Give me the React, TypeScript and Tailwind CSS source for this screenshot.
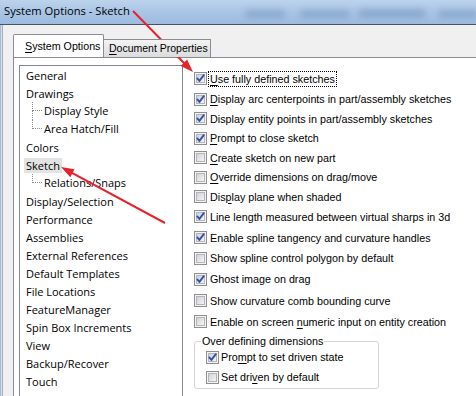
import React from "react";

const UI = { fontFamily: '"Liberation Sans", Arial, sans-serif' };
const SEG = { fontFamily: '"Open Sans", "Noto Sans", sans-serif' };

function Box({ checked }: { checked: boolean }) {
  return (
    <svg width="13" height="13" viewBox="0 0 13 13" className="shrink-0">
      <defs>
        <linearGradient id="cbg" x1="0" y1="0" x2="1" y2="1">
          <stop offset="0" stopColor="#cdd0d6" />
          <stop offset="1" stopColor="#f7f7f7" />
        </linearGradient>
      </defs>
      <rect x="0.5" y="0.5" width="12" height="12" fill="#f4f4f4" stroke="#8f8f8f" />
      <rect x="2.5" y="2.5" width="8" height="8" fill="url(#cbg)" stroke="#b3b5b9" />
      {checked && (
        <path d="M3.3 6.4 L5.4 8.9 L9.8 3.2" fill="none" stroke="#3552a6" strokeWidth="1.9" strokeLinecap="round" strokeLinejoin="round" />
      )}
    </svg>
  );
}

function Label({ pre, u, post }: { pre: string; u?: string; post?: string }) {
  return (
    <>
      {pre}
      {u ? <span className="underline underline-offset-[2px]">{u}</span> : null}
      {post}
    </>
  );
}

type Row = { h: string; c: boolean; pre: string; u?: string; post?: string; focus?: boolean };

const rows: Row[] = [
  { h: "h-[21px]", c: true, pre: "", u: "U", post: "se fully defined sketches", focus: true },
  { h: "h-[20px]", c: true, pre: "", u: "D", post: "isplay arc centerpoints in part/assembly sketches" },
  { h: "h-[19px]", c: true, pre: "Display entity points in part/assembly sketches" },
  { h: "h-[20px]", c: true, pre: "", u: "P", post: "rompt to close sketch" },
  { h: "h-[19px]", c: false, pre: "", u: "C", post: "reate sketch on new part" },
  { h: "h-[20px]", c: false, pre: "", u: "O", post: "verride dimensions on drag/move" },
  { h: "h-[19px]", c: false, pre: "Dis", u: "p", post: "lay plane when shaded" },
  { h: "h-[21px]", c: true, pre: "Line length measured between virtual sharps in 3d" },
  { h: "h-[21px]", c: true, pre: "Enable spline tangency and curvature handles" },
  { h: "h-[20px]", c: false, pre: "Show spline control polygon by default" },
  { h: "h-[22px]", c: true, pre: "Ghost image on drag" },
  { h: "h-[21px]", c: false, pre: "Show curvature comb bounding curve" },
  { h: "h-[21px]", c: false, pre: "Enable on screen ", u: "n", post: "umeric input on entity creation" },
];

type TreeItem = { t: string; child?: boolean; last?: boolean; sel?: boolean };
const tree: TreeItem[] = [
  { t: "General" },
  { t: "Drawings" },
  { t: "Display Style", child: true },
  { t: "Area Hatch/Fill", child: true, last: true },
  { t: "Colors" },
  { t: "Sketch", sel: true },
  { t: "Relations/Snaps", child: true, last: true },
  { t: "Display/Selection" },
  { t: "Performance" },
  { t: "Assemblies" },
  { t: "External References" },
  { t: "Default Templates" },
  { t: "File Locations" },
  { t: "FeatureManager" },
  { t: "Spin Box Increments" },
  { t: "View" },
  { t: "Backup/Recover" },
  { t: "Touch" },
  { t: "Hole Wizard/Toolbox" },
];

export default function App() {
  return (
    <div className="relative w-[476px] h-[396px] overflow-hidden flex flex-col bg-[#f0f0f0] text-black" style={UI}>
      {/* title bar */}
      <div className="relative h-[24px] shrink-0 overflow-hidden bg-gradient-to-b from-[#bcd3ec] via-[#a9c5e6] to-[#9dbbe0]">
        <div className="absolute left-[245px] top-[10px] w-[40px] h-[8px] rounded-full bg-[#6f8fb8] opacity-50 blur-[3px]" />
        <div className="absolute left-[300px] top-[10px] w-[50px] h-[8px] rounded-full bg-[#6f8fb8] opacity-50 blur-[3px]" />
        <div className="absolute left-[358px] top-[9px] w-[68px] h-[9px] rounded-full bg-[#6f8fb8] opacity-50 blur-[3px]" />
        <div className="absolute left-[438px] top-[10px] w-[40px] h-[8px] rounded-full bg-[#6f8fb8] opacity-50 blur-[3px]" />
        <div className="relative pl-[4px] pt-[3px] text-[11.2px] leading-[16px] text-black" style={SEG}>
          System Options - Sketch
        </div>
      </div>
      <div className="flex-1 flex border-t border-[#48535f] min-h-0">
        <div className="w-[3px] shrink-0 bg-gradient-to-r from-[#7f9bbf] via-[#cbdaec] to-[#dbe5f0] border-r border-[#a4afbb]" />
        <div className="flex-1 flex flex-col pl-[10px] pt-[10px] min-h-0">
          {/* tabs */}
          <div className="flex items-end h-[22px] shrink-0 relative z-10">
            <div className="h-[23px] w-[91px] bg-white border border-b-0 border-[#898c95] rounded-t-[2px] pl-[11px] pt-[4px] text-[10.7px] leading-[14px] whitespace-nowrap">
              <span className="underline underline-offset-[2px]">S</span>ystem Options
            </div>
            <div className="h-[18px] w-[108px] -ml-[1px] bg-gradient-to-b from-[#f3f3f3] to-[#dcdcdc] border border-b-0 border-[#898c95] pl-[5px] pt-[1px] text-[10.5px] leading-[14px] whitespace-nowrap">
              <span className="underline underline-offset-[2px]">D</span>ocument Properties
            </div>
          </div>
          {/* page */}
          <div className="flex-1 flex bg-white border-l border-t border-[#898c95] pt-[7px] pl-[5px] min-h-0">
            {/* tree */}
            <div className="w-[164px] shrink-0 border border-b-0 border-[#828790] bg-white pl-[4px] text-[11px]" style={SEG}>
              {tree.map((it, i) =>
                it.child ? (
                  <div key={i} className="h-[18px] flex items-stretch pl-[8px] leading-[18px]">
                    <div className="w-[10px] flex flex-col shrink-0">
                      <div className="h-[9px] border-l border-b border-dotted border-[#8a8a8a]" />
                      {!it.last && <div className="flex-1 border-l border-dotted border-[#8a8a8a]" />}
                    </div>
                    <span className="px-[2px] whitespace-nowrap">{it.t}</span>
                  </div>
                ) : (
                  <div key={i} className="h-[18px] flex items-center">
                    <span className={"px-[2px] leading-[15px] whitespace-nowrap " + (it.sel ? "bg-[#e3e3e3]" : "")}>{it.t}</span>
                  </div>
                )
              )}
            </div>
            {/* options */}
            <div className="flex-1 pl-[11px] pt-[3px] text-[10.75px] leading-[14px]">
              {rows.map((r, i) => (
                <div key={i} className={r.h + " flex items-center"}>
                  <Box checked={r.c} />
                  {r.focus ? (
                    <span className="ml-[1px] px-[1px] border border-dotted border-black whitespace-nowrap">
                      <Label pre={r.pre} u={r.u} post={r.post} />
                    </span>
                  ) : (
                    <span className="ml-[3px] whitespace-nowrap">
                      <Label pre={r.pre} u={r.u} post={r.post} />
                    </span>
                  )}
                </div>
              ))}
              <fieldset className="mt-[2px] w-[185px] border border-[#d5d5d5] rounded-[3px] pl-[11px]">
                <legend className="-ml-[5px] px-[1px] leading-[14px]">Over defining dimensions</legend>
                <div className="h-[18px] flex items-center">
                  <Box checked={true} />
                  <span className="ml-[2px] whitespace-nowrap">
                    Pro<span className="underline underline-offset-[2px]">m</span>pt to set driven state
                  </span>
                </div>
                <div className="h-[22px] flex items-center">
                  <Box checked={false} />
                  <span className="ml-[2px] whitespace-nowrap">
                    Set dri<span className="underline underline-offset-[2px]">v</span>en by default
                  </span>
                </div>
              </fieldset>
            </div>
          </div>
        </div>
      </div>
      {/* red annotation arrows */}
      <svg className="absolute left-0 top-0 pointer-events-none" width="476" height="396">
        <line x1="133" y1="11" x2="184.5" y2="63.5" stroke="#e4232b" strokeWidth="2" />
        <polygon points="193,72 180.7,65.9 187.1,59.5" fill="#e4232b" />
        <line x1="165" y1="223" x2="71.5" y2="172.7" stroke="#e4232b" strokeWidth="2" />
        <polygon points="61,167 74.5,169.2 70.3,177.2" fill="#e4232b" />
      </svg>
    </div>
  );
}
